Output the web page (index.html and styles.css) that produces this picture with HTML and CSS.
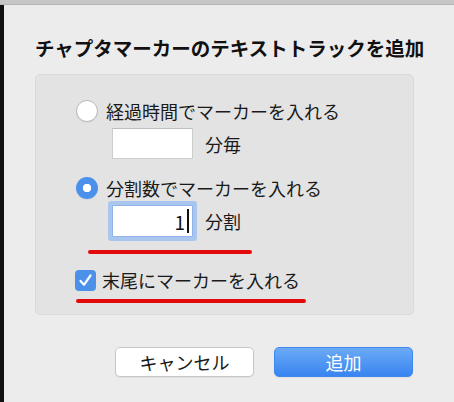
FILE: index.html
```html
<!DOCTYPE html>
<html lang="ja">
  <head>
    <meta charset="utf-8" />
    <title>チャプタマーカーのテキストトラックを追加</title>
    <link rel="stylesheet" href="styles.css">
  </head>
  <body>
    <div class="top-strip"></div>
    <div class="window">
      <div class="edge"></div>
      <section class="dialog">
        <h1 class="title">チャプタマーカーのテキストトラックを追加</h1>

        <div class="group">
          <div class="option">
            <span class="radio"></span>
            <span class="label">経過時間でマーカーを入れる</span>
          </div>
          <div class="field-row">
            <span class="field"></span>
            <span class="unit">分毎</span>
          </div>

          <div class="option option-second">
            <span class="radio radio-on"></span>
            <span class="label">分割数でマーカーを入れる</span>
          </div>
          <div class="field-row">
            <span class="field field-focus">1<span class="caret"></span></span>
            <span class="unit">分割</span>
          </div>
          <div class="mark mark-first"></div>

          <div class="option option-check">
            <span class="check">
              <svg width="21" height="21" viewBox="0 0 21 21">
                <path d="M5.5 11 L9 14.8 L15.5 5.5" fill="none" stroke="#fff" stroke-width="2.2" stroke-linecap="round" stroke-linejoin="round" />
              </svg>
            </span>
            <span class="label">末尾にマーカーを入れる</span>
          </div>
          <div class="mark mark-second"></div>
        </div>

        <div class="buttons">
          <button class="btn">キャンセル</button>
          <button class="btn btn-primary">追加</button>
        </div>
      </section>
    </div>
  </body>
</html>
```

FILE: styles.css
```css
/* || Initial styles */

html {
  font-family: "Noto Sans CJK JP", "Noto Sans", sans-serif;
}

* {
  box-sizing: border-box;
}

body {
  margin: 0;
  width: 454px;
  height: 402px;
  overflow: hidden;
  background-color: #ececec;
  color: #1a1a1a;
}

/* || Window frame */

.top-strip {
  height: 5px;
  background-color: #c6c6c6;
  border-bottom: 1px solid #b4b4b4;
}

.window {
  display: flex;
  height: 397px;
}

.edge {
  width: 4px;
  background-color: #111;
}

.dialog {
  flex: 1;
  min-width: 0;
  padding: 31px 40px 0 31px;
}

.title {
  margin: 0;
  font-size: 19.5px;
  font-weight: 700;
  line-height: 24px;
  white-space: nowrap;
  color: #111;
}

/* || Group box */

.group {
  margin-top: 14px;
  padding: 24px 0 13px 40px;
  background-color: #e3e3e3;
  border: 1px solid #dadada;
  border-radius: 5px;
  height: 241px;
}

.option {
  display: flex;
  align-items: center;
  gap: 8px;
  height: 24px;
  font-size: 18px;
}

.option-second {
  margin-top: 17px;
}

.option-check {
  margin-top: 14px;
  gap: 6px;
  margin-left: -1px;
}

.radio {
  width: 22px;
  height: 22px;
  border-radius: 50%;
  background-color: #fff;
  border: 1px solid #b9b9b9;
  box-shadow: 0 1px 1px rgba(0, 0, 0, 0.06);
}

.radio-on {
  border: none;
  background: radial-gradient(circle, #fff 0 4px, #4a90ec 4.5px);
}

.check {
  width: 21px;
  height: 21px;
  border-radius: 4px;
  background-color: #4b91ea;
  display: flex;
}

.label {
  line-height: 24px;
  white-space: nowrap;
}

.field-row {
  display: flex;
  align-items: center;
  gap: 12px;
  margin-top: 5px;
  margin-left: 36px;
  font-size: 18px;
}

.field {
  width: 81px;
  height: 31px;
  background-color: #fff;
  border: 1px solid #cdcdcd;
  border-top-color: #bdbdbd;
  display: flex;
  align-items: center;
  justify-content: flex-end;
  padding-right: 3px;
  font-size: 19px;
  line-height: 1;
}

.field-focus {
  height: 32px;
  border-color: #8fb3e6;
  box-shadow: 0 0 0 4px #a9c6ef;
  border-radius: 1px;
  color: #111;
}

.caret {
  width: 2px;
  height: 24px;
  margin-left: 2px;
  background-color: #111;
}

.unit {
  line-height: 24px;
}

/* || Red marks */

.mark {
  height: 4px;
  background-color: #e30a0a;
  border-radius: 2px;
}

.mark-first {
  width: 164px;
  margin: 13px 0 0 12px;
}

.mark-second {
  width: 230px;
  margin: 7px 0 0 0;
}

/* || Buttons */

.buttons {
  display: flex;
  justify-content: flex-end;
  gap: 20px;
  margin-top: 32px;
  padding-right: 1px;
}

.btn {
  width: 139px;
  height: 30px;
  font-family: inherit;
  font-size: 18px;
  color: #1a1a1a;
  background-color: #fff;
  border: 1px solid #c7c7c7;
  border-radius: 5px;
  box-shadow: 0 1px 1px rgba(0, 0, 0, 0.06);
  padding: 0;
}

.btn-primary {
  color: #fff;
  border-color: #3f88ec;
  background: linear-gradient(#6aaaf6, #3984f0);
}
```
